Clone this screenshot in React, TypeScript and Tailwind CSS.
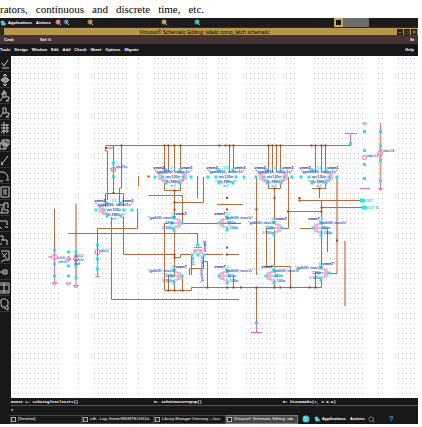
import React from 'react';
import { Search } from 'lucide-react';

const menus = ['Tools', 'Design', 'Window', 'Edit', 'Add', 'Check', 'Sheet', 'Options', 'Migrate'];

const tasks = ['[Terminal]', 'icfb - Log: /home/MS/MTECH11/s', 'Library Manager Directory .../scu', 'Virtuoso® Schematic Editing: sda'];

const tools = [
  { name: 'Check and save', path: 'M2 6L4 9L8 3M2 11H9' },
  { name: 'Fit', path: 'M5 1V13M1 7H9M3 3L5 1L7 3M3 11L5 13L7 11M3 5L1 7L3 9M7 5L9 7L7 9M3 5H7V9H3Z' },
  { name: 'Zoom in', path: 'M3 3H6V8H3ZM3 8L0 12M1 5H5M6 8H9V10L6 12H9M4 1V5' },
  { name: 'Zoom out', path: 'M3 3H6V8H3ZM3 8L0 12M6 8H9V10L6 12H9' },
  { name: 'Stretch', path: 'M1 4H9M1 7H9M2 10H9M4 1V13M7 3V12M1 12L4 9' },
  { name: 'Copy', path: 'M2 3H9V8H2ZM0 6H6V12H0ZM4 3V12M7 3V10' },
  { name: 'Delete', path: 'M1 12L8 3M1 9L3 12' },
  { name: 'Undo', path: 'M0 3H3Q8 4 8 10M6 11H9M0 12H3' },
  { name: 'Property', path: 'M1 2H9V12H1M3 5H7M3 7H7M3 9H7M1 2V12' },
  { name: 'Instance', path: 'M0 4H4V9H8V12H0M4 4V2H8V7M2 6V12' },
  { name: 'Wire', path: 'M0 4H7V8M0 10L2 12M5 10H8' },
  { name: 'Wide wire', path: 'M0 3H3V7H7V12M0 11H2M1 7H3' },
  { name: 'Label', path: 'M1 2H9V11H4L1 13M2 4L7 10M7 4L3 8' },
  { name: 'Pin', path: 'M3 5H7V9H3ZM0 7H3M5 6V8' },
  { name: 'Command options', path: 'M0 2H9V12H0M0 4H8M4 2V12M0 10H8' },
  { name: 'Repeat', path: 'M1 3Q5 0 8 4V8Q6 11 2 10L1 7ZM4 11L8 13V9' },
];

// columns of grid dots come in bands
const bands = [
  [15, 59], [77, 81], [93, 126], [136, 140], [154, 188], [198, 206], [216, 228],
  [246, 274], [284, 294], [313, 362], [378, 382], [398, 417],
];

const wires = [
  'M106 148V145.5H350.5V134',
  'M105.5 148H113.5M113.5 145V193M105.5 148V151H107.5V200M121.5 145V188H119.5V206',
  'M105.5 206V193.5H123.5V206',
  'M137.5 209V228.5H97.5V276M111.5 217V299.5H239M123.5 217V254.5H174.5',
  'M138.5 176V186M197.5 176V198M203.5 177V202.5H174.5',
  'M164.5 145V172M168.5 145V172M174.5 145V172M180.5 145V172',
  'M164.5 183V190.5H180.5V183M174.5 190V216',
  'M148.5 195.5H182.5V224',
  'M229.5 145V172M233.5 145V172M217 204.5H243',
  'M268.5 145V172M272.5 145V172M276.5 145V172M280.5 145V172',
  'M268.5 183V188.5H280.5V183M274.5 188V220',
  'M256.5 177V275M288.5 177V228.5H282',
  'M315.5 145V172M321.5 145V172M325.5 145V172',
  'M312 188.5H326M325.5 183V188M319.5 188V198',
  'M300 200.5H362M321.5 207.5H364M321.5 200V220M288 211.5H321.5',
  'M54.5 209V283M68 233.5H197.5V244',
  'M182 223.5H241M168 223.5H164.5V290.5H191.5V287.5H321.5V279',
  'M174.5 230V276M174.5 257.5H180.5V254.5H191M168.5 275V290M174.5 281V290M182.5 276V290',
  'M191.5 255V275M189.5 275V268.5H203.5V256M203 261.5H207.5V287M204 254.5H223M228 254.5H239',
  'M233.5 276V287M256.5 287V331',
  'M274.5 230V268M274.5 281V287M272 228.5H266.5V266.5H290.5V287',
  'M321.5 230V268M300 228.5H312M321 228.5H327.5V252M328 273.5H337V240M321 272.5H315.5V287',
];

// pale double width wires
const wideWires = ['M337 176V240', 'M345 241V306', 'M76 204V277', 'M380.5 130V181'];

const dots = [
  [121.5, 145.5], [106, 148], [113.5, 193], [148.5, 176.5], [164.5, 145.5], [168.5, 145.5], [174.5, 145.5],
  [180.5, 145.5], [219.5, 145.5], [225.5, 145.5], [229.5, 145.5], [233.5, 145.5], [268.5, 145.5], [272.5, 145.5],
  [276.5, 145.5], [280.5, 145.5], [311.5, 145.5], [315.5, 145.5], [321.5, 145.5], [325.5, 145.5], [174.5, 190.5],
  [174.5, 202.5], [174.5, 209.5], [227, 198], [227, 209.5], [256.5, 209.5], [274.5, 188.5], [274.5, 198],
  [288, 211.5], [299.5, 198], [299.5, 200.5], [319.5, 188.5], [321.5, 207.5], [321.5, 211.5], [174.5, 254.5],
  [174.5, 257.5], [168.5, 290.5], [174.5, 290.5], [182.5, 290.5], [207.5, 287.5], [227, 247.5], [227, 254.5],
  [227, 287.5], [233.5, 287.5], [241, 287.5], [256.5, 287.5], [274.5, 287.5], [280.5, 287.5], [290.5, 287.5],
  [309.5, 287.5], [315.5, 287.5], [337, 240.5],
];

const pairs = [
  { x: 114, y: 209, sides: 'left' },
  { x: 173, y: 176, sides: 'both' },
  { x: 226, y: 176, sides: 'none' },
  { x: 274, y: 176, sides: 'both' },
  { x: 319, y: 176, sides: 'right' },
];

const singles = [
  { x: 174, y: 223, flip: false },
  { x: 227, y: 223, flip: true },
  { x: 274, y: 228, flip: false },
  { x: 321, y: 228, flip: true },
  { x: 174, y: 276, flip: false },
  { x: 227, y: 276, flip: true },
  { x: 274, y: 276, flip: true },
  { x: 321, y: 273, flip: false },
];

const nodes = [
  [54.5, 250], [54.5, 264], [54.5, 276], [68.5, 252], [68.5, 266], [68.5, 276], [76, 252], [76, 266], [76, 278],
  [97.5, 245], [97.5, 259], [97.5, 269], [113.5, 163], [113.5, 176.5], [256.5, 323], [350.5, 143.5],
  [364.5, 131.5], [364.5, 150.5], [364.5, 164.5], [364.5, 178.5], [380.5, 131.5], [380.5, 146], [380.5, 160.5],
  [380.5, 181], [197.5, 245], [192, 255], [198, 255], [204, 255],
];

const Node = ({ x, y }: { x: number; y: number }) => (
  <rect x={x - 1.5} y={y - 1.5} width="3" height="3" fill="#22e5ee" />
);

const Pair = ({ x, y, sides }: { x: number; y: number; sides: string }) => (
  <g>
    {[-18, -10, 10, 18].map((dx) => <Node key={dx} x={x + dx} y={y + 1} />)}
    {[-7, 7].map((dx) => <Node key={dx} x={x + dx} y={y - 6} />)}
    {[-7, 7].map((dx) => <Node key={dx} x={x + dx} y={y + 7} />)}
    {(sides === 'left' || sides === 'both') && (
      <path d={`M${x - 6} ${y - 3}H${x - 12}V${y + 4}H${x - 6}M${x - 14} ${y - 3}V${y + 4}`} stroke="#f06aa8" />
    )}
    {(sides === 'right' || sides === 'both') && (
      <path d={`M${x + 5} ${y - 3}H${x + 11}V${y + 4}H${x + 5}M${x + 13} ${y - 3}V${y + 4}`} stroke="#f06aa8" />
    )}
    <path d={`M${x - 11} ${y + 5}H${x + 11}`} stroke="#f06aa8" strokeDasharray="6 3" />
    <g textAnchor="middle" fontSize="3" fontWeight="bold">
      <text x={x - 14} y={y - 7} fontSize="4" fill="#1212b8">vmm2</text>
      <text x={x + 14} y={y - 7} fontSize="4" fill="#1212b8">vmm1</text>
      <text x={x} y={y - 7} fill="#22e5ee">D D</text>
      <text x={x} y={y - 3} fontSize="4" fill="#1b57c9">"gpdk090_nmos1v"</text>
      <text x={x} y={y + 2} fontSize="4" fill="#1763cc">w=120n</text>
      <text x={x} y={y + 7} fontSize="4" fill="#1779cc">l=100n</text>
      <text x={x} y={y + 11} fill="#169fd4">m:1</text>
    </g>
  </g>
);

const Single = ({ x, y, flip }: { x: number; y: number; flip: boolean }) => {
  const d = flip ? -1 : 1;
  return (
    <g>
      <path d={`M${x} ${y - 4}H${x + 4 * d}V${y + 4}H${x}M${x + 6 * d} ${y - 4}V${y + 4}M${x} ${y}H${x + 3 * d}`} stroke="#f06aa8" />
      <Node x={x} y={y - 6} />
      <Node x={x - 2 * d} y={y} />
      <Node x={x} y={y + 7} />
      <Node x={x + 8 * d} y={y} />
      <g fontSize="3" fontWeight="bold" textAnchor={flip ? 'start' : 'end'}>
        <text x={x} y={y - 8} fill="#22e5ee">D</text>
        <text x={x + 2 * d} y={y - 4} fill="#1b57c9">"gpdk090_nmos1v"</text>
        <text x={x} y={y + 1} fontSize="4" fill="#1779cc">120n</text>
        <text x={x} y={y + 6} fontSize="4" fill="#1779cc">l:100n</text>
      </g>
      <text x={x + 7 * d} y={y - 8} fontSize="4" fontWeight="bold" textAnchor="middle" fill="#1212b8">vmm7</text>
    </g>
  );
};

const Schematic = () => (
  <svg viewBox="11 56 411 342" className="block w-full" fontFamily="Liberation Sans, sans-serif" fill="none">
    <defs>
      <pattern id="grid" x="13" y="57" width="4" height="5" patternUnits="userSpaceOnUse">
        <rect x="1" y="1" width="1" height="1" fill="#cbcbcb" />
      </pattern>
    </defs>
    {bands.map(([from, to]) => (
      <rect key={from} x={from - 1} y="57" width={to - from + 2} height="341" fill="url(#grid)" />
    ))}
    <path d={wideWires.join('')} stroke="#dfa58a" strokeWidth="2" />
    <path d={wires.join('')} stroke="#bb6a3e" strokeWidth="1" />
    {dots.map(([x, y], i) => (
      <rect key={i} x={x - 1} y={y - 1} width="2" height="2" fill="#a93f12" />
    ))}
    {pairs.map((p) => <Pair key={p.x} {...p} />)}
    {singles.map((s) => <Single key={`${s.x}-${s.y}`} {...s} />)}

    {/* Sources, grounds and supplies */}
    <g stroke="#ee6ba6">
      <circle cx="113.5" cy="169.5" r="2.5" />
      <path d="M113.5 164V175M112 170L113.5 168L115 170" />
      <path d="M54.5 252V282M51 257L54.5 254L58 257L54.5 260ZM48 257H51M52 283H57L54.5 285Z" />
      <path d="M66 283H71L68.5 285ZM65 259H71M68 256L71 259L68 262Z" />
      <path d="M76 278V286M73.5 285.5H78.5L76 288ZM73 259L76 256L79 259L76 262Z" />
      <circle cx="97.5" cy="252" r="2.5" />
      <path d="M97.5 256V277M95.5 276.5H99.5" />
      <path d="M256.5 324V332M251 332.5H262M350.5 134V142M345 133.5H357" />
      <path d="M362.5 124L364.5 122L366.5 124ZM360 188.5H370" />
      <circle cx="364.5" cy="157.5" r="2" />
      <path d="M380.5 123V131M380.5 182V188M378.5 188.5H382.5L380.5 190.5ZM377.5 153L380.5 149L383 153L380.5 157Z" />
      <path d="M194 254V250H202V254M194 247.5H202M196 250V254M200 250V254" />
    </g>
    {nodes.map(([x, y], i) => <Node key={i} x={x} y={y} />)}
    <g fontSize="4" fontWeight="bold">
      <text transform="translate(206 252) rotate(-90)" fill="#1212b8">vmm6</text>
      <text transform="translate(203 283) rotate(-90)" fontSize="3" fill="#1b57c9">"gpdk090_nmos1v"</text>
      <text transform="translate(194 266) rotate(-90)" fill="#1779cc">120n</text>
      <text x="116" y="168" fontSize="3" fill="#1b57c9">idc=10u</text>
      <text x="100" y="252" fontSize="3" fill="#1b57c9">vdc=1</text>
      <g fontSize="3">
        <text x="58" y="259" fill="#1b57c9">v1=0</text>
        <text x="58" y="263" fill="#1779cc">vdc=0</text>
        <text x="74" y="257" fill="#1b57c9">v2=1.2</text>
        <text x="74" y="261" fill="#1779cc">per=1n</text>
        <text x="74" y="265" fill="#1b57c9">td=0</text>
      </g>
      <text x="367" y="157" fontSize="3" fill="#1b57c9">vdc=1.2</text>
      <text x="383" y="152" fontSize="3" fill="#1b57c9">vdc=1.8</text>
      <text x="366" y="202" fontSize="3" fill="#22c5e5">OUT</text>
      <text x="368" y="209" fontSize="3" fill="#22c5e5">OUT_B</text>
    </g>
    <path d="M360 198.5H364L366 200.5L364 202.5H360ZM362 205.5H366L368 207.5L366 209.5H362Z" fill="#22e5ee" />
  </svg>
);

const Globe = () => (
  <svg viewBox="0 0 8 8" className="size-2 shrink-0" fill="none">
    <circle cx="4" cy="4" r="3.5" fill="#4cc9d8" />
    <path d="M2 1.5Q5 3 3 6" stroke="#d5ffff" />
  </svg>
);

const Foot = () => (
  <svg viewBox="0 0 6 6" className="size-[6px] shrink-0" fill="#53cbd9">
    <ellipse cx="2.5" cy="2" rx="2" ry="1.5" />
    <ellipse cx="3.5" cy="4" rx="2.5" ry="1.5" />
  </svg>
);

// small round launchers of the top panel
const Launcher = ({ color, name }: { color: string; name: string }) => (
  <button aria-label={name} className="size-[7px] shrink-0">
    <svg viewBox="0 0 7 7" className="size-[7px]">
      <circle cx="3" cy="3" r="2.5" fill={color} />
      <path d="M2 2L6 6M5 1L3 3" stroke="#b9b2a6" />
    </svg>
  </button>
);

const App = () => {
  return (
    <div className="w-full overflow-hidden bg-white font-['Liberation_Sans',sans-serif] text-[4px] font-bold leading-[8px] text-white">
      <p className="flex h-[18px] gap-2 whitespace-nowrap pt-[2px] font-['Liberation_Serif',serif] text-[11px] font-normal leading-[15px] text-black">
        {['rators,', 'continuous', 'and', 'discrete', 'time,', 'etc.'].map((word) => (
          <span key={word}>{word}</span>
        ))}
      </p>

      <div className="mr-1">
        {/* Desktop panel */}
        <div className="flex h-[9px] items-center bg-[#1b1b1b]">
          <Foot />
          <button className="ml-[2px]">Applications</button>
          <button className="ml-1">Actions</button>
          <div className="ml-1 flex gap-px">
            <Launcher name="Browser" color="#d0756b" />
            <Launcher name="Mail" color="#4369a6" />
          </div>
          <div className="ml-[17px] flex flex-3">
            <Launcher name="Help" color="#a3803d" />
          </div>
          <div className="flex flex-7 gap-[26px]">
            <Launcher name="Notes" color="#b38d59" />
            <Launcher name="Monitor" color="#36a9b4" />
          </div>
          <div className="flex h-full w-[84px] shrink-0">
            <div className="w-[9px] border-2 border-[#c5a75b] bg-[#1b1111]" />
            <div className="w-[26px] bg-[#6c6c6c]" />
          </div>
        </div>

        {/* Title bar */}
        <div className="flex h-[8px] items-center border-t border-[#332b1c] bg-[#b5964e] text-black">
          <div className="h-full w-1 bg-[#2a2819]" />
          <h1 className="flex-1 whitespace-nowrap pl-2 text-center text-[5px] font-normal">Virtuoso® Schematic Editing: sdadc comp_latch schematic</h1>
          {['–', '□', '×'].map((sign) => (
            <button key={sign} aria-label={sign} className="mr-px h-[6px] w-[6px] bg-[#2b2414] text-[5px] leading-[6px] text-[#d5b871]">{sign}</button>
          ))}
        </div>

        <div className="flex h-[9px] items-center bg-[#483334] px-1">
          <span className="w-9">Cmd:</span>
          <span className="flex-1">Sel: 0</span>
          <span>St</span>
        </div>

        <nav className="flex h-[12px] items-center gap-1 bg-[#181818] pr-1">
          {menus.map((menu) => <button key={menu}>{menu}</button>)}
          <button className="ml-auto">Help</button>
        </nav>
      </div>

      <div className="flex bg-[#181818]">
        <div className="w-[11px] shrink-0">
          {tools.map((tool) => (
            <button key={tool.name} aria-label={tool.name} className="flex h-4 w-[10px] items-center justify-center border-b border-[#353535]">
              <svg viewBox="0 0 10 14" className="h-[14px] w-[10px]" fill="none" stroke="#c4c4c4">
                <path d={tool.path} />
              </svg>
            </button>
          ))}
        </div>
        <main className="min-w-0 flex-1 bg-white">
          <Schematic />
        </main>
      </div>

      <div className="mr-1 bg-[#181818]">
        <div className="ml-[11px] flex h-[8px] items-center whitespace-nowrap border-b border-[#555555] font-['Liberation_Mono',monospace]">
          <span className="w-[143px]">mouse L: schSingleSelectPt()</span>
          <span className="w-[129px]">M: schHiMousePopUp()</span>
          <span>R: hiZoomAbs(1, 3 0.0)</span>
        </div>
        <div className="ml-[11px] h-[8px]">&gt;</div>
        {/* Task bar */}
        <div className="flex h-[10px] items-center whitespace-nowrap pl-[10px] font-normal">
          {tasks.map((task, i) => (
            <button
              key={task}
              className={`flex h-[9px] w-[72px] items-center gap-[2px] border ${i === 3 ? 'border-[#777777] bg-[#484848]' : 'border-[#444444]'}`}
            >
              <span className="size-[5px] shrink-0 border border-[#aaaaaa] bg-[#222222]" />
              {task}
            </button>
          ))}
          <span className="ml-1"><Globe /></span>
          <span className="ml-1"><Foot /></span>
          <button className="ml-[2px] font-bold">Applications</button>
          <button className="ml-1 font-bold">Actions</button>
          <Search className="ml-[3px] text-[#aaaaaa]" size={7} />
          <span className="ml-[14px] text-[8px] font-bold text-[#419bd8]">?</span>
        </div>
      </div>
    </div>
  );
};

export default App;
